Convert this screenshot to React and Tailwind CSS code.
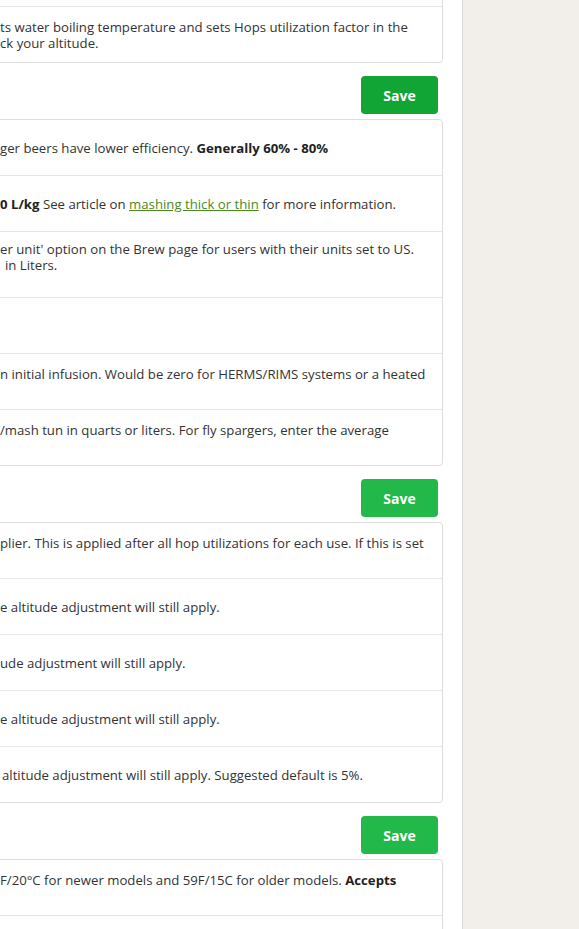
import React from 'react';

// Settings rows: the label + input sit in the left column, help text on the right.
// The page is scrolled so only the right-hand end of each help text is in view.
const sections = [
  {
    button: 'bg-[#10a535]',
    rows: [
      { label: 'Units', h: 'h-[55px]', lines: [''] },
      {
        label: 'Altitude',
        h: 'h-[56px]',
        lines: [
          'ts water boiling temperature and sets Hops utilization factor in the',
          'ck your altitude.',
        ],
      },
    ],
  },
  {
    button: 'bg-[#22b94a]',
    rows: [
      {
        label: 'Brewhouse Efficiency',
        h: 'h-[55px]',
        lines: [
          <>
            ger beers have lower efficiency.{' '}
            <b className="font-bold text-[#222]">Generally 60% - 80%</b>
          </>,
        ],
      },
      {
        label: 'Mash Thickness',
        h: 'h-[56px]',
        lines: [
          <>
            <b className="font-bold text-[#222]">0 L/kg</b> See article on{' '}
            <a href="#" className="text-[#4a8a22] underline">
              mashing thick or thin
            </a>{' '}
            for more information.
          </>,
        ],
      },
      {
        label: 'Grain Absorption',
        h: 'h-[66px]',
        lines: [
          "er unit' option on the Brew page for users with their units set to US.",
          <span className="pl-[5px]">in Liters.</span>,
          '',
        ],
      },
      { label: 'Kettle Deadspace', h: 'h-[56px]', lines: [''] },
      {
        label: 'Mash Tun Deadspace',
        h: 'h-[56px]',
        lines: ['n initial infusion. Would be zero for HERMS/RIMS systems or a heated', ''],
      },
      {
        label: 'Mash Tun Volume',
        h: 'h-[56px]',
        lines: ['/mash tun in quarts or liters. For fly spargers, enter the average', ''],
      },
    ],
  },
  {
    button: 'bg-[#22b94a]',
    rows: [
      {
        label: 'Hop Utilization Multiplier',
        h: 'h-[55px]',
        lines: ['plier. This is applied after all hop utilizations for each use. If this is set', ''],
      },
      { label: 'Pellet Hops', h: 'h-[56px]', lines: ['e altitude adjustment will still apply.'] },
      { label: 'Leaf Hops', h: 'h-[56px]', lines: ['ude adjustment will still apply.'] },
      { label: 'Plug Hops', h: 'h-[56px]', lines: ['e altitude adjustment will still apply.'] },
      {
        label: 'Whirlpool',
        h: 'h-[56px]',
        lines: [<span className="pl-[2px]">altitude adjustment will still apply. Suggested default is 5%.</span>],
      },
    ],
  },
];

const lastCard = {
  label: 'Hydrometer Calibration',
  lines: [
    <>
      F/20°C for newer models and 59F/15C for older models.{' '}
      <b className="font-bold text-[#222]">Accepts</b>
    </>,
    '',
  ],
};

function Row({ row, first }) {
  return (
    <div className={`${row.h} flex items-center ${first ? '' : 'border-t border-[#e5e5e5]'}`}>
      <div className="w-[459px] shrink-0 flex items-center gap-4 px-4">
        <label className="w-[180px] font-bold text-[#333]">{row.label}</label>
        <div className="h-[34px] w-[200px] rounded-[4px] border border-[#ccc]" />
      </div>
      <div className="flex-1 pr-5 leading-[16px] whitespace-nowrap">
        {row.lines.map((line, i) => (
          <div key={i}>{line === '' ? '\u00a0' : line}</div>
        ))}
      </div>
    </div>
  );
}

export default function App() {
  return (
    <div className="flex min-h-[929px] font-['Open_Sans',sans-serif] text-[13.2px] text-[#333]">
      <main className="w-[463px] shrink-0 overflow-hidden border-r border-[#dcdcdc] bg-white">
        <div className="ml-[-460px] mt-[-50px] w-[903px]">
          {sections.map((section, si) => (
            <div key={si}>
              <div className="rounded-[4px] border border-[#dddddd] bg-white">
                {section.rows.map((row, ri) => (
                  <Row key={ri} row={row} first={ri === 0} />
                ))}
              </div>
              <div className="mt-[13px] mb-[5px] flex justify-end pr-[5px]">
                <button
                  className={`h-[38px] w-[77px] rounded-[4px] ${section.button} text-[14px] font-bold text-white`}
                >
                  Save
                </button>
              </div>
            </div>
          ))}
          <div className="rounded-[4px] border border-[#dddddd] bg-white">
            <Row row={{ ...lastCard, h: 'h-[55px]' }} first />
            <Row row={{ label: 'Boil Time', h: 'h-[56px]', lines: [''] }} />
          </div>
        </div>
      </main>
      <aside className="flex-1 bg-[#f2efea]" />
    </div>
  );
}
